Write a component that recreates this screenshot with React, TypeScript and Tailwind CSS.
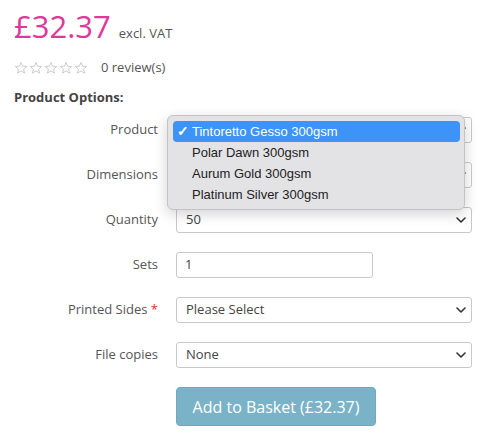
import React from "react";

const Chevron = () => (
  <svg width="10" height="6" viewBox="0 0 10 6" className="absolute right-[5px] top-1/2 -translate-y-1/2">
    <path d="M1 1 L5 5 L9 1" fill="none" stroke="#333" strokeWidth="1.6" strokeLinecap="round" strokeLinejoin="round" />
  </svg>
);

const Star = () => (
  <svg width="14" height="14" viewBox="0 0 24 24">
    <path
      d="M12 2.5 L14.8 9 L21.8 9.4 L16.4 13.9 L18.1 20.8 L12 17 L5.9 20.8 L7.6 13.9 L2.2 9.4 L9.2 9 Z"
      fill="none"
      stroke="#c8c8c8"
      strokeWidth="1.6"
      strokeLinejoin="round"
    />
  </svg>
);

const Select = ({ value }: { value: string }) => (
  <div className="relative h-[26px] w-[296px] rounded-[3px] border border-[#c9c9c9] bg-white pl-[9px] flex items-center text-[13px] text-[#444]">
    {value}
    <Chevron />
  </div>
);

const Row = ({ label, required, children }: { label: string; required?: boolean; children: React.ReactNode }) => (
  <div className="flex items-center h-[26px] gap-[18px]">
    <div className="w-[144px] text-right text-[13px] text-[#555]">
      {label}
      {required && <span className="text-[#d9302c]"> *</span>}
    </div>
    {children}
  </div>
);

export default function App() {
  const items = ["Tintoretto Gesso 300gsm", "Polar Dawn 300gsm", "Aurum Gold 300gsm", "Platinum Silver 300gsm"];
  return (
    <div className="relative w-[492px] h-[440px] bg-white px-[14px] pt-[6px]" style={{ fontFamily: '"Open Sans", sans-serif' }}>
      <div className="flex items-baseline">
        <span className="text-[31px] leading-[40px] text-[#dc3a98]">£32.37</span>
        <span className="ml-[8px] text-[13px] text-[#555]">excl. VAT</span>
      </div>
      <div className="mt-[12px] h-[20px] flex items-center">
        <div className="flex gap-[1px]">
          <Star />
          <Star />
          <Star />
          <Star />
          <Star />
        </div>
        <span className="ml-[13px] text-[13px] text-[#555]">0 review(s)</span>
      </div>
      <div className="mt-[9px] text-[13px] leading-[20px] font-bold text-[#444]">Product Options:</div>
      <div className="mt-[10px] flex flex-col gap-[19px]">
        <Row label="Product">
          <Select value="" />
        </Row>
        <Row label="Dimensions">
          <Select value="" />
        </Row>
        <Row label="Quantity">
          <Select value="50" />
        </Row>
        <Row label="Sets">
          <div className="h-[26px] w-[197px] rounded-[3px] border border-[#c9c9c9] bg-white pl-[8px] flex items-center text-[13px] text-[#444]">1</div>
        </Row>
        <Row label="Printed Sides" required>
          <Select value="Please Select" />
        </Row>
        <Row label="File copies">
          <Select value="None" />
        </Row>
      </div>
      <div className="mt-[19px] ml-[162px]">
        <button className="h-[39px] w-[200px] rounded-[4px] bg-[#7ab3c8] border border-[#6fa9bf] text-white text-[16px]">
          Add to Basket (£32.37)
        </button>
      </div>
      <div
        className="absolute left-[167px] top-[115px] w-[298px] rounded-[6px] border border-[#c4c4c8] bg-[#e3e3e6] pt-[5px] pb-[4px] pl-[5px] pr-[4px] shadow-[0_4px_14px_rgba(0,0,0,0.18)]"
        style={{ fontFamily: '"Liberation Sans", Arial, sans-serif' }}
      >
        {items.map((it, i) => (
          <div
            key={it}
            className={
              i === 0
                ? "relative h-[21px] rounded-[4px] bg-[#3d93f7] text-white flex items-center pl-[19px] text-[13px]"
                : "relative h-[21px] flex items-center pl-[19px] text-[13px] text-[#222]"
            }
          >
            {i === 0 && <span className="absolute left-[4px] text-[14px] font-bold">✓</span>}
            {it}
          </div>
        ))}
      </div>
    </div>
  );
}
